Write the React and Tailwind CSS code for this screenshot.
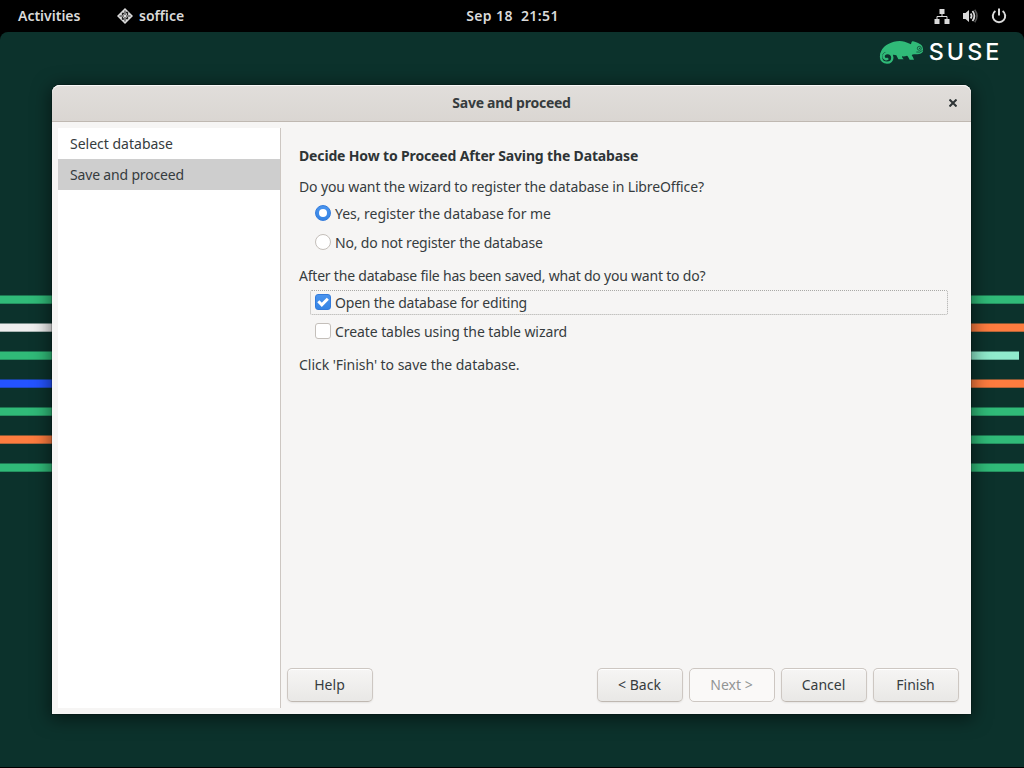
import React from "react";

const BARS_LEFT = [
  "bg-[#30ba78]", "bg-[#efefef]", "bg-[#30ba78]", "bg-[#2453ff]",
  "bg-[#30ba78]", "bg-[#fe7c3f]", "bg-[#30ba78]",
];
const BARS_RIGHT = [
  "bg-[#30ba78]", "bg-[#fe7c3f]", "bg-[#90ebcd] mr-[5px]", "bg-[#fe7c3f]",
  "bg-[#30ba78]", "bg-[#30ba78]", "bg-[#30ba78]",
];

function Bars({ colors, width }) {
  return (
    <div className={`flex shrink-0 flex-col gap-[19px] pt-[263px] ${width}`}>
      {colors.map((c, i) => (
        <div key={i} className={`h-[9px] shrink-0 shadow-[inset_0_1px_rgba(12,50,44,0.5),inset_0_-1px_rgba(12,50,44,0.3)] ${c}`} />
      ))}
    </div>
  );
}

function TopBar() {
  return (
    <header className="grid h-8 shrink-0 grid-cols-[1fr_auto_1fr] items-center bg-black text-[14px] font-semibold text-[#dadada]">
      <div className="flex items-center pl-[18px]">
        <span className="w-[99px] whitespace-nowrap">Activities</span>
        <svg className="mr-[6px]" width="16" height="16" viewBox="0 0 16 16">
          <path d="M8 0l8 8-8 8-8-8z" fill="#dadada" />
          <path d="M8 2.500v11M2.500 8h11" fill="none" stroke="#222" strokeWidth="1" />
          <path d="M5.500 7V5.500H7M9 4.500h1.500V7M5.500 9v2H7M9 10.500h1.500V9" fill="none" stroke="#222" strokeWidth="1.300" />
          <path d="M7 7h2v2H7z" fill="#dadada" />
        </svg>
        <span>soffice</span>
      </div>
      <span className="whitespace-pre pl-px tracking-[0.4px]">Sep 18  21:51</span>
      <div className="flex items-center justify-end pr-[17px]">
        <svg className="mr-[12px]" width="16" height="16" viewBox="0 0 16 16" fill="#dadada">
          <path d="M5.500 1h5v5h-5zM.500 11h5v5h-5zM10.500 11h5v5h-5z" />
          <path d="M8 6v2.500M3 11V8.500h10V11" fill="none" stroke="#dadada" />
        </svg>
        <svg className="mr-[13px]" width="16" height="16" viewBox="0 0 16 16" fill="none">
          <path d="M1 5h2.500L7 2v12L3.500 11H1z" fill="#dadada" />
          <path d="M8.700 5.500q1.800 2.500 0 5M10.500 3q3.800 5 0 10" stroke="#dadada" strokeWidth="1.800" />
          <path d="M12.700 1.700q4.600 6.300 0 12.600" stroke="#555" strokeWidth="1.600" />
        </svg>
        <svg width="16" height="16" viewBox="0 0 16 16" fill="none" stroke="#dadada" strokeWidth="2">
          <path d="M4.400 3a6.200 6.200 0 1 0 7.200 0M8 .500v7" />
        </svg>
      </div>
    </header>
  );
}

function Logo() {
  return (
    <svg className="absolute right-[20px] top-[4px]" width="128" height="32" viewBox="0 0 384 96">
      <path d="M12 64C12 45 21 32 37 24C52 16 70 12 86 17C93 19 99 22 105 25C106 20 107 15 111 16C121 19 133 23 138 29C141 35 142 43 141 46C139 52 132 55 124 55C117 55 111 53 107 57C109 61 112 64 114 71H101C99 67 97 62 93 59C88 61 82 62 78 61C78 65 80 67 83 70H67L61 58C56 56 49 56 46 58L32 48L18 55Z" fill="#30ba78" />
      <circle cx="31" cy="65" r="17" fill="#0c322c" />
      <path d="M42 46C24 38 15 52 15 63C15 75 24 81 33 81C43 81 49 74 49 66C49 57 42 52 34 52C27 52 22 58 23 64C24 70 32 73 36 68" transform="translate(0 -1)" fill="none" stroke="#30ba78" strokeWidth="7" />
      <g fill="none" stroke="#0c322c" strokeWidth="2">
        <circle cx="130" cy="37" r="6" />
        <path d="M121 48Q132 51 140 43" />
      </g>
      <circle cx="131" cy="37" r="1.800" fill="#0c322c" />
      <text x="158" y="71.500" fill="#fff" className="font-['Inter'] text-[70px] font-medium tracking-[9.3px]">SUSE</text>
    </svg>
  );
}

function Option({ type, checked, focused, tracking, children }) {
  const box = type === "radio" ? "rounded-full" : "rounded-[3px]";
  const tone = checked ? "border-[#327bdc] bg-linear-to-b from-[#4a94ee] to-[#3584e4]" : "border-[#c4bfba] bg-white";
  const ring = focused ? "border-dotted border-[#a9a9a6]" : "border-transparent";
  return (
    <div className={`flex h-[25px] items-center gap-1 rounded-[2px] border pl-1 ${ring}`}>
      <span className={`relative -top-px flex size-4 items-center justify-center border ${box} ${tone}`}>
        {checked && type === "radio" && <span className="size-2 rounded-full bg-white" />}
        {checked && type === "checkbox" && (
          <svg className="shrink-0" width="14" height="14" viewBox="0 0 14 14" fill="none" stroke="#fff" strokeWidth="3">
            <path d="M2.300 6.300l3.500 3.500 6-6" />
          </svg>
        )}
      </span>
      <span className={tracking}>{children}</span>
    </div>
  );
}

function Button({ disabled, children }) {
  const tone = disabled
    ? "bg-[#faf9f8] text-[#929595] border-[#cdc7c2]"
    : "bg-linear-to-b from-[#f6f5f4] to-[#e9e8e6] border-[#cdc7c2] border-b-[#bfb8b1] shadow-[inset_0_1px_#fff,0_1px_2px_rgba(0,0,0,0.07)]";
  return <button className={`h-[34px] w-[86px] rounded-[5px] border pr-px ${tone}`}>{children}</button>;
}

export default function App() {
  return (
    <div className="relative flex h-[768px] w-[1024px] flex-col overflow-hidden bg-black font-['Noto_Sans',sans-serif] text-[14px] leading-5 text-[#363c3e]">
      <TopBar />
      <div className="relative mb-px flex min-h-0 flex-1 rounded-t-[8px] bg-[#0c322c]">
        <Bars colors={BARS_LEFT} width="w-[52px]" />
        <main className="relative mt-[53px] flex h-[629px] w-[919px] shrink-0 flex-col rounded-t-[8px] bg-[#f6f5f4] shadow-[0_3px_18px_2px_rgba(0,0,0,0.5),0_0_0_1px_rgba(0,0,0,0.18)]">
          <div className="grid h-[37px] shrink-0 grid-cols-[1fr_auto_1fr] items-center rounded-t-[8px] border-b border-[#bfb8b1] bg-linear-to-b from-[#e1dedb] to-[#dad6d2] font-bold shadow-[inset_0_1px_#f9f8f8]">
            <span />
            <span className="tracking-[-0.25px]">Save and proceed</span>
            <svg className="mr-[14px] justify-self-end" width="8" height="8" viewBox="0 0 8 8" stroke="#2e3436" strokeWidth="2">
              <path d="M.500.500l7 7M7.500.500l-7 7" />
            </svg>
          </div>
          <div className="flex min-h-0 flex-1 py-[6px] pl-[6px]">
            <nav className="w-[223px] border-r border-[#cdc7c2] bg-white">
              <div className="flex h-[31px] items-center pl-3">Select database</div>
              <div className="flex h-[31px] items-center bg-[#cecece] pl-3 tracking-[-0.17px]">Save and proceed</div>
            </nav>
            <section className="flex flex-1 flex-col pl-[6px] pr-[12px]">
              <div className="pl-3 pr-[11px]">
                <h1 className="mt-[18px] font-bold tracking-[-0.15px] text-[#2e3436]">Decide How to Proceed After Saving the Database</h1>
                <p className="mt-[11px] tracking-[-0.135px]">Do you want the wizard to register the database in LibreOffice?</p>
                <div className="mt-[4px] flex flex-col gap-1 pl-[11px]">
                  <Option type="radio" checked tracking="tracking-[-0.03px]">Yes, register the database for me</Option>
                  <Option type="radio" tracking="tracking-[-0.18px]">No, do not register the database</Option>
                </div>
                <p className="mt-[11px] tracking-[-0.21px]">After the database file has been saved, what do you want to do?</p>
                <div className="mt-[4px] flex flex-col gap-1 pl-[11px]">
                  <Option type="checkbox" checked focused tracking="tracking-[-0.2px]">Open the database for editing</Option>
                  <Option type="checkbox" tracking="tracking-[-0.08px]">Create tables using the table wizard</Option>
                </div>
                <p className="mt-[11px] tracking-[-0.04px]">Click 'Finish' to save the database.</p>
              </div>
              <div className="mb-[6px] mt-auto flex gap-[6px]">
                <Button>Help</Button>
                <span className="flex-1" />
                <Button>&lt; Back</Button>
                <Button disabled>Next &gt;</Button>
                <Button>Cancel</Button>
                <Button>Finish</Button>
              </div>
            </section>
          </div>
        </main>
        <Bars colors={BARS_RIGHT} width="w-[53px]" />
        <Logo />
      </div>
    </div>
  );
}
